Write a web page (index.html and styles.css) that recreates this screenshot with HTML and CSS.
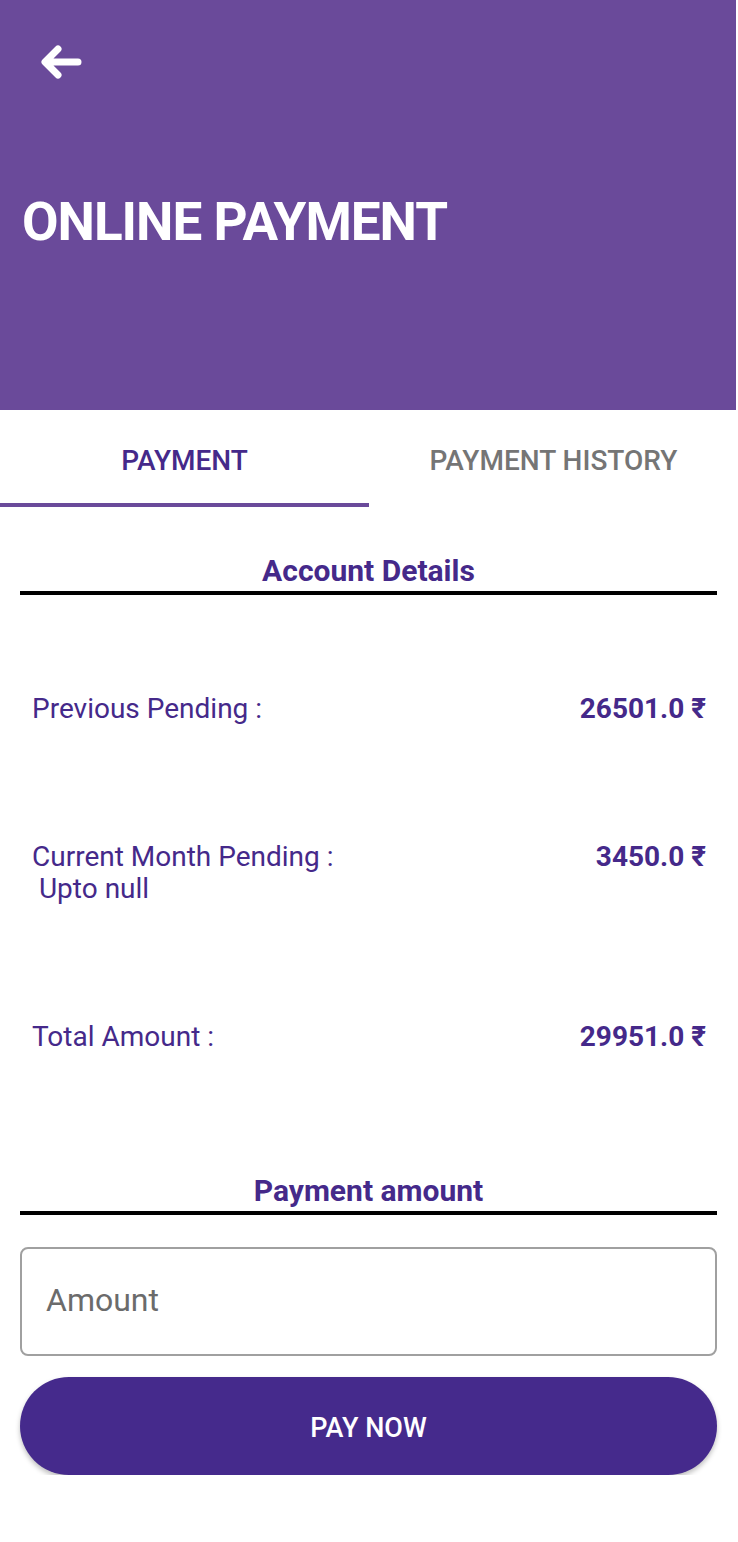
FILE: index.html
```html
<!DOCTYPE html>
<html>
<head>
<meta charset="utf-8">
<link rel="stylesheet" href="styles.css">
</head>
<body>
<div class="page">
  <header class="appbar">
    <div class="back">
      <svg width="46" height="36" viewBox="0 0 46 36">
        <path d="M40 18 H8 M20 5 L7 18 L20 31" fill="none" stroke="#fff" stroke-width="7" stroke-linecap="round" stroke-linejoin="round"/>
      </svg>
    </div>
    <h1 class="title">ONLINE PAYMENT</h1>
  </header>
  <nav class="tabs">
    <div class="tab active">PAYMENT</div>
    <div class="tab">PAYMENT HISTORY</div>
  </nav>
  <section class="section">
    <h2 class="heading">Account Details</h2>
    <div class="rule"></div>
    <div class="rows">
      <div class="row">
        <div class="label">Previous Pending :</div>
        <div class="value">26501.0 ₹</div>
      </div>
      <div class="row">
        <div class="label">Current Month Pending :<br>&nbsp;Upto null</div>
        <div class="value">3450.0 ₹</div>
      </div>
      <div class="row">
        <div class="label">Total Amount :</div>
        <div class="value">29951.0 ₹</div>
      </div>
    </div>
  </section>
  <section class="section pay">
    <h2 class="heading">Payment amount</h2>
    <div class="rule"></div>
    <div class="input"><span class="placeholder">Amount</span></div>
    <button class="btn">PAY NOW</button>
  </section>
</div>
</body>
</html>
```
FILE: styles.css
```css
* { box-sizing: border-box; }
html, body { margin: 0; padding: 0; background: #fff; }
body { font-family: Roboto, "Noto Sans", sans-serif; }
.page { width: 738px; }
.appbar {
  height: 410px;
  background: #6a4a9a;
  padding: 44px 0 0 0;
  border-right: 2px solid #fff;
}
.back { margin-left: 38px; height: 36px; }
.back svg { display: block; }
.title {
  margin: 110px 0 0 22px;
  font-size: 53px;
  font-weight: 700;
  color: #fff;
  line-height: 64px;
  letter-spacing: -1px;
}
.tabs { display: flex; height: 97px; }
.tab {
  flex: 1;
  display: flex;
  align-items: center;
  justify-content: center;
  font-size: 28px;
  font-weight: 500;
  color: #757575;
  padding-top: 4px;
}
.tab.active { color: #45298a; border-bottom: 4px solid #6a4a9a; padding-top: 8px; }
.section { padding: 0 21px 0 20px; }
.heading {
  margin: 44px 0 0 0;
  text-align: center;
  font-size: 30px;
  font-weight: 700;
  line-height: 40px;
  color: #45298a;
}
.rule { height: 4px; background: #000; }
.rows { display: flex; flex-direction: column; gap: 116px; padding: 98px 11px 0 12px; }
.row { display: flex; justify-content: space-between; align-items: flex-start; }
.label { font-size: 28px; line-height: 32px; color: #45298a; }
.value { font-size: 28px; line-height: 32px; font-weight: 700; color: #45298a; }
.pay .heading { margin-top: 118px; }
.input {
  margin-top: 32px;
  height: 109px;
  border: 2px solid #a0a0a0;
  border-radius: 8px;
  display: flex;
  align-items: center;
  padding-left: 24px;
  padding-bottom: 3px;
}
.placeholder { font-size: 32px; color: #6b6b6b; }
.btn {
  margin-top: 21px;
  width: 100%;
  height: 98px;
  border: none;
  border-radius: 49px;
  background: #452a8c;
  color: #fff;
  font-family: Roboto, sans-serif;
  font-size: 27px;
  font-weight: 500;
  padding-top: 4px;
  box-shadow: 0 3px 5px rgba(0,0,0,0.25);
  display: block;
}
```
